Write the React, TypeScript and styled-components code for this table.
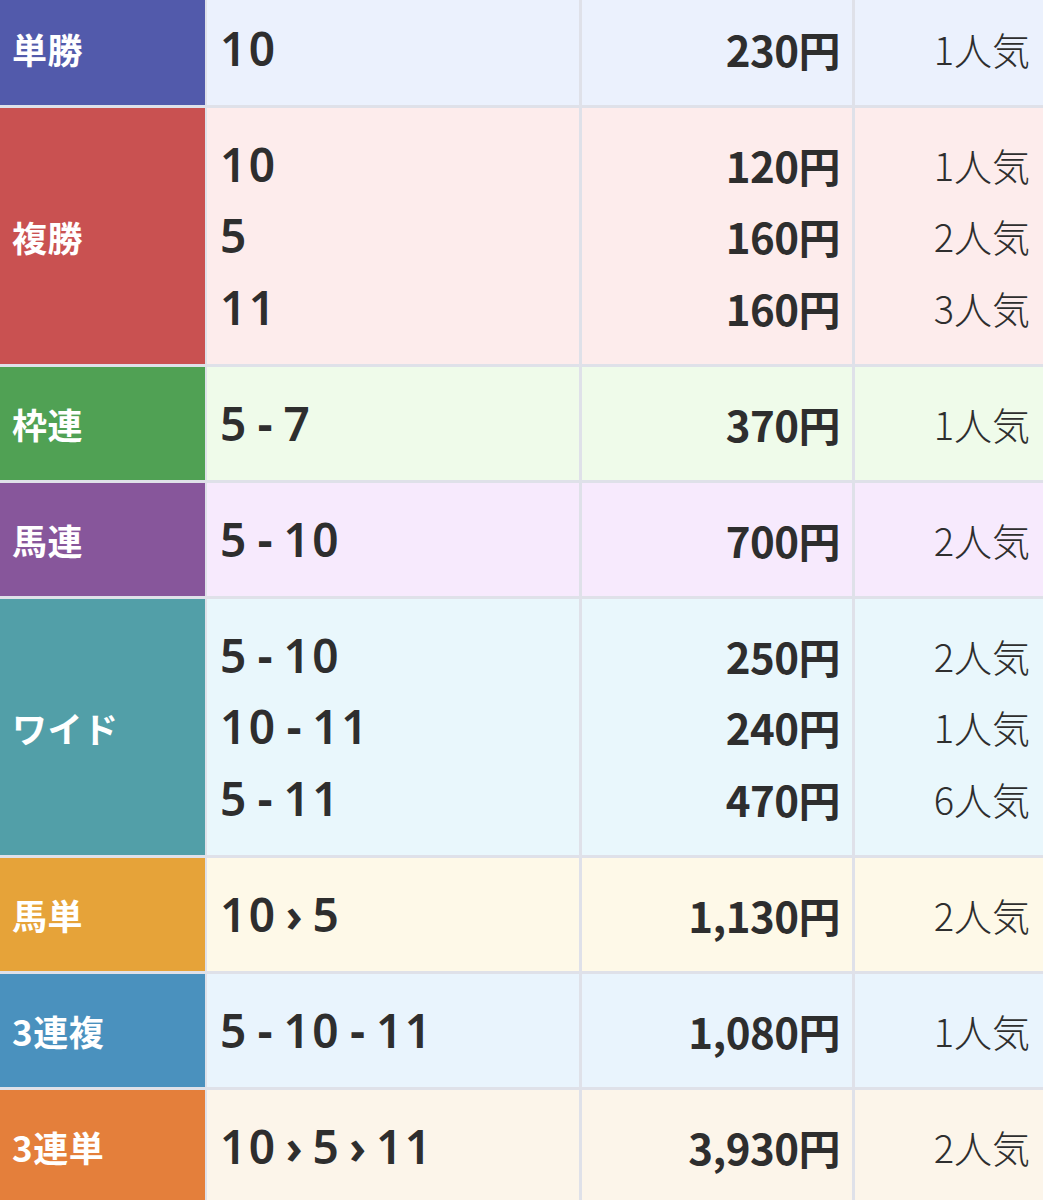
import React, { FC } from "react";
import styled, { createGlobalStyle } from "styled-components";

type Payout = {
  combo: string;
  yen: string;
  rank: number;
};

type Bet = {
  label: string;
  tone: string;
  tint: string;
  payouts: Payout[];
};

const bets: Bet[] = [
  { label: "単勝", tone: "#525aab", tint: "#ebf1fd", payouts: [{ combo: "10", yen: "230", rank: 1 }] },
  {
    label: "複勝",
    tone: "#c95151",
    tint: "#fdecec",
    payouts: [
      { combo: "10", yen: "120", rank: 1 },
      { combo: "5", yen: "160", rank: 2 },
      { combo: "11", yen: "160", rank: 3 },
    ],
  },
  { label: "枠連", tone: "#50a154", tint: "#effbea", payouts: [{ combo: "5-7", yen: "370", rank: 1 }] },
  { label: "馬連", tone: "#87569b", tint: "#f7eafd", payouts: [{ combo: "5-10", yen: "700", rank: 2 }] },
  {
    label: "ワイド",
    tone: "#529fa8",
    tint: "#e9f7fc",
    payouts: [
      { combo: "5-10", yen: "250", rank: 2 },
      { combo: "10-11", yen: "240", rank: 1 },
      { combo: "5-11", yen: "470", rank: 6 },
    ],
  },
  { label: "馬単", tone: "#e6a339", tint: "#fef9e8", payouts: [{ combo: "10›5", yen: "1,130", rank: 2 }] },
  { label: "3連複", tone: "#4a91be", tint: "#e9f4fd", payouts: [{ combo: "5-10-11", yen: "1,080", rank: 1 }] },
  { label: "3連単", tone: "#e47f3b", tint: "#fcf5ea", payouts: [{ combo: "10›5›11", yen: "3,930", rank: 2 }] },
];

// split "5-10" / "10›5" into numbers and separators so the gaps can be styled
const renderCombo = (combo: string) =>
  combo.split(/([-›])/).map((part, i) =>
    part === "-" || part === "›" ? (
      <Sep key={i} $arrow={part === "›"}>
        {part}
      </Sep>
    ) : (
      <span key={i}>{part}</span>
    )
  );

const GlobalStyle = createGlobalStyle`
  html, body {
    margin: 0;
    padding: 0;
    background: #ffffff;
    overflow: hidden;
  }
`;

const App: FC = () => (
  <>
    <GlobalStyle />
    <Table>
      {bets.map((bet) => (
        <Row key={bet.label} $tint={bet.tint}>
          <Label $tone={bet.tone}>{bet.label}</Label>
          <Combos>
            {bet.payouts.map((p, i) => (
              <Line key={i}>{renderCombo(p.combo)}</Line>
            ))}
          </Combos>
          <Prices>
            {bet.payouts.map((p, i) => (
              <Line key={i}>{p.yen}円</Line>
            ))}
          </Prices>
          <Ranks>
            {bet.payouts.map((p, i) => (
              <Line key={i}>{p.rank}人気</Line>
            ))}
          </Ranks>
        </Row>
      ))}
    </Table>
  </>
);

const Table = styled.div`
  width: 1043px;
  margin-top: -8px;
  display: flex;
  flex-direction: column;
  gap: 3px;
  background: #dfe1e9;
`;

const Row = styled.div<{ $tint: string }>`
  display: grid;
  grid-template-columns: 205px 374px 273px 1fr;
  background: ${(p) => p.$tint};
  color: #2e2e2e;
`;

const Label = styled.div<{ $tone: string }>`
  display: flex;
  align-items: center;
  padding-left: 12px;
  background: ${(p) => p.$tone};
  color: #ffffff;
  font-family: "Noto Sans CJK JP", sans-serif;
  font-weight: 700;
  font-size: 35px;
  letter-spacing: 0.5px;
`;

const Cell = styled.div`
  display: flex;
  flex-direction: column;
  justify-content: center;
  padding: 20.75px 0;
  border-left: 3px solid #dfe1e9;
`;

const Combos = styled(Cell)`
  border-left-width: 2px;
  padding-left: 13px;
  font-family: "Noto Sans", sans-serif;
  font-weight: 600;
  font-size: 46px;
  letter-spacing: 2.5px;
  white-space: pre;
`;

const Sep = styled.span<{ $arrow: boolean }>`
  display: inline-block;
  margin: ${(p) => (p.$arrow ? "0 10px 0 8px" : "0 11px 0 9px")};
  font-weight: 700;
  letter-spacing: 0;
`;

const Prices = styled(Cell)`
  align-items: flex-end;
  padding-right: 12px;
  font-family: "Noto Sans CJK JP", sans-serif;
  font-weight: 700;
  font-size: 42px;
  letter-spacing: -0.5px;
`;

const Ranks = styled(Cell)`
  align-items: flex-end;
  padding-right: 13px;
  font-family: "Noto Sans CJK JP", sans-serif;
  font-weight: 300;
  font-size: 38px;
`;

const Line = styled.div`
  height: 71.5px;
  line-height: 71.5px;
`;

export default App;
